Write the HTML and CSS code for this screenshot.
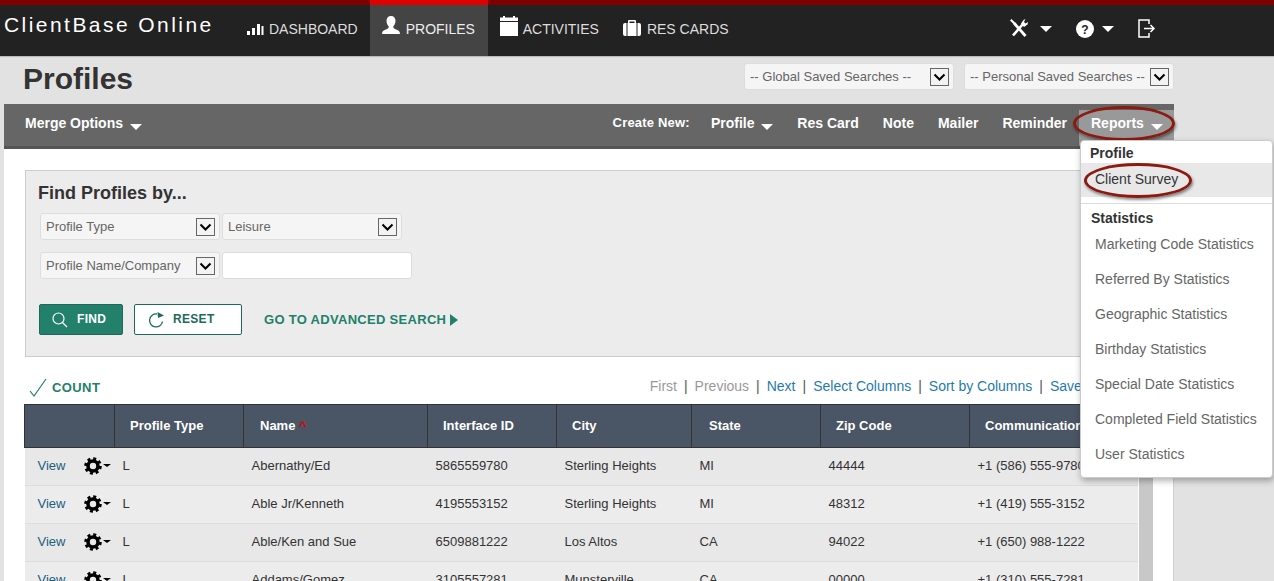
FILE: index.html
```html
<!DOCTYPE html>
<html lang="en">
<head>
<meta charset="utf-8">
<title>ClientBase Online</title>
<link rel="stylesheet" href="styles.css">
</head>
<body>
<svg class="defs" width="0" height="0" aria-hidden="true">
  <symbol id="gear" viewBox="0 0 18 18">
    <circle cx="9" cy="9" r="5" fill="none" stroke="#000" stroke-width="3.6"/>
    <circle cx="9" cy="9" r="7.2" fill="none" stroke="#000" stroke-width="3.2" stroke-dasharray="2.9 2.75"/>
  </symbol>
  <symbol id="chev" viewBox="0 0 19 18">
    <rect x="0.5" y="0.5" width="18" height="17" fill="#f3f3f3" stroke="#666"/>
    <path d="M4.5 6.5 9.5 11.5 14.5 6.5" fill="none" stroke="#000" stroke-width="2"/>
  </symbol>
</svg>

<header class="topbar">
  <div class="brand">ClientBase Online</div>
  <nav class="mainnav">
    <a class="navitem nav-dash"><svg class="ico" width="18" height="16" viewBox="0 0 18 16"><path fill="#fff" d="M1 10h3v4H1zM6 7h3v7H6zM11 3h3v11h-3zM15.500 5h2v9h-2z"/></svg>DASHBOARD</a>
    <a class="navitem active nav-prof"><svg class="ico" width="18" height="20" viewBox="0 0 18 20"><path fill="#fff" d="M9 0c3 0 4.500 2 4.500 5 0 2.500-1.200 4.500-2.300 5.500 0 1.500 1 2.300 3 3 2.300.8 3.800 1.800 3.800 4.500H0c0-2.700 1.500-3.700 3.800-4.500 2-.7 3-1.500 3-3C5.700 9.500 4.500 7.500 4.500 5 4.500 2 6 0 9 0z"/></svg>PROFILES</a>
    <a class="navitem nav-act"><svg class="ico" width="18" height="20" viewBox="0 0 18 20"><path fill="#fff" d="M0 6h18v14H0zM0 1.500h3V0h2v1.500h8V0h2v1.500h3V5H0z"/></svg>ACTIVITIES</a>
    <a class="navitem nav-res"><svg class="ico" width="18" height="16" viewBox="0 0 18 16"><path fill="#fff" d="M6 0h6a1 1 0 0 1 1 1v2h3a2 2 0 0 1 2 2v9a2 2 0 0 1-2 2H2a2 2 0 0 1-2-2V5a2 2 0 0 1 2-2h3V1a1 1 0 0 1 1-1zm.5 1.500V3h5V1.500z"/><path stroke="#222" stroke-width="1" d="M4 3v13M14 3v13"/></svg>RES CARDS</a>
  </nav>
  <div class="tools">
    <svg class="tool-ico" width="18" height="19" viewBox="0 0 18 19"><path fill="none" stroke="#fff" stroke-width="2.800" d="M4 4 15.500 17"/><path fill="none" stroke="#fff" stroke-width="2.600" d="M13 5 3 16.500"/><path fill="#fff" d="M11 4.500 13.500 1 15.500 0 14 3l1.500 1.500L18 3l-.5 2.500L14 8zM0 1.500 1.500 0 5 3.500 3.500 5z"/></svg>
    <span class="caret big"></span>
    <svg class="tool-ico help" width="18" height="18" viewBox="0 0 18 18"><circle cx="9" cy="9" r="9" fill="#fff"/><text x="9" y="13.500" class="help-q">?</text></svg>
    <span class="caret big second"></span>
    <svg class="tool-ico logout" width="18" height="19" viewBox="0 0 18 19"><path fill="none" stroke="#fff" stroke-width="1.500" d="M11 5V1H1v17h10v-4M6 9.500h10M12.500 6l3.500 3.500-3.500 3.500"/></svg>
  </div>
</header>

<main class="content">
  <div class="pagehead">
    <h1>Profiles</h1>
    <div class="searches">
      <div class="sel saved"><span>-- Global Saved Searches --</span><svg class="chev"><use href="#chev"/></svg></div>
      <div class="sel saved"><span>-- Personal Saved Searches --</span><svg class="chev"><use href="#chev"/></svg></div>
    </div>
  </div>

  <div class="toolbar">
    <a class="tb merge">Merge Options <i class="caret"></i></a>
    <div class="tb-right">
      <span class="tb create">Create New:</span>
      <a class="tb">Profile <i class="caret"></i></a>
      <a class="tb">Res Card</a>
      <a class="tb">Note</a>
      <a class="tb">Mailer</a>
      <a class="tb">Reminder</a>
      <a class="tb reports">Reports <i class="caret"></i><span class="oval oval-reports"></span></a>
    </div>
  </div>

  <section class="panel">
    <div class="findbox">
      <h2>Find Profiles by...</h2>
      <div class="findrow">
        <div class="sel field"><span>Profile Type</span><svg class="chev"><use href="#chev"/></svg></div>
        <div class="sel field"><span>Leisure</span><svg class="chev"><use href="#chev"/></svg></div>
      </div>
      <div class="findrow">
        <div class="sel field"><span>Profile Name/Company</span><svg class="chev"><use href="#chev"/></svg></div>
        <input class="textinput" type="text" aria-label="Profile name">
      </div>
      <div class="actions">
        <button class="btn btn-find"><svg width="16" height="16" viewBox="0 0 16 16"><circle cx="6.500" cy="6.500" r="5.500" fill="none" stroke="#fff" stroke-width="1.200"/><path d="M10.500 10.500 15 15" stroke="#fff" stroke-width="1.200"/></svg>FIND</button>
        <button class="btn btn-reset"><svg width="17" height="16" viewBox="0 0 17 16"><path d="M14.500 9.500A6.500 6.500 0 1 1 9 2" fill="none" stroke="#1d6a5a" stroke-width="1.300"/><path d="M9.500 0 16 3.500 10 6z" fill="#1d6a5a"/></svg>RESET</button>
        <a class="advanced">GO TO ADVANCED SEARCH<i class="tri"></i></a>
      </div>
    </div>

    <div class="listbar">
      <a class="count"><svg width="19" height="19" viewBox="0 0 19 19"><path d="M1 13l4 5L17 1" fill="none" stroke="#22806b" stroke-width="1.200"/></svg>COUNT</a>
      <div class="pager">
        <span class="off">First</span><b>|</b><span class="off">Previous</span><b>|</b><a>Next</a><b>|</b><a>Select Columns</a><b>|</b><a>Sort by Columns</a><b>|</b><a>Save Columns</a>
      </div>
    </div>

    <div class="tablewrap">
      <table class="grid">
        <colgroup><col class="c1"><col class="c2"><col class="c3"><col class="c4"><col class="c5"><col class="c6"><col class="c7"><col class="c8"></colgroup>
        <thead>
          <tr><th></th><th>Profile Type</th><th class="th-name">Name <em>^</em></th><th>Interface ID</th><th>City</th><th class="th-state">State</th><th>Zip Code</th><th>Communication</th></tr>
        </thead>
        <tbody>
          <tr><td class="act"><a>View</a><span class="gearbox"><svg width="18" height="18"><use href="#gear"/></svg><i class="caret mini"></i></span></td><td>L</td><td>Abernathy/Ed</td><td>5865559780</td><td>Sterling Heights</td><td>MI</td><td>44444</td><td>+1 (586) 555-9780</td></tr>
          <tr><td class="act"><a>View</a><span class="gearbox"><svg width="18" height="18"><use href="#gear"/></svg><i class="caret mini"></i></span></td><td>L</td><td>Able Jr/Kenneth</td><td>4195553152</td><td>Sterling Heights</td><td>MI</td><td>48312</td><td>+1 (419) 555-3152</td></tr>
          <tr><td class="act"><a>View</a><span class="gearbox"><svg width="18" height="18"><use href="#gear"/></svg><i class="caret mini"></i></span></td><td>L</td><td>Able/Ken and Sue</td><td>6509881222</td><td>Los Altos</td><td>CA</td><td>94022</td><td>+1 (650) 988-1222</td></tr>
          <tr><td class="act"><a>View</a><span class="gearbox"><svg width="18" height="18"><use href="#gear"/></svg><i class="caret mini"></i></span></td><td>L</td><td>Addams/Gomez</td><td>3105557281</td><td>Munsterville</td><td>CA</td><td>00000</td><td>+1 (310) 555-7281</td></tr>
        </tbody>
      </table>
      <div class="scroll"></div>
    </div>
  </section>
</main>

<aside class="menu">
  <div class="mhead first">Profile</div>
  <a class="mitem current">Client Survey<span class="oval oval-survey"></span></a>
  <hr>
  <div class="mhead stats">Statistics</div>
  <a class="mitem">Marketing Code Statistics</a>
  <a class="mitem">Referred By Statistics</a>
  <a class="mitem">Geographic Statistics</a>
  <a class="mitem">Birthday Statistics</a>
  <a class="mitem">Special Date Statistics</a>
  <a class="mitem">Completed Field Statistics</a>
  <a class="mitem">User Statistics</a>
</aside>
</body>
</html>
```
FILE: styles.css
```css
* { box-sizing: border-box; }
html, body { margin: 0; height: 581px; overflow: hidden; }
body { background: #e2e2e2; font-family: "Liberation Sans", Arial, sans-serif; font-size: 14px; color: #333; position: relative; }
.defs { position: absolute; }
a { text-decoration: none; }

.topbar { height: 56px; background: #222; border-top: 5px solid #800000; display: flex; align-items: stretch; color: #fff; box-shadow: 0 1px 1px #bbb; }
.brand { width: 234px; padding: 8px 0 0 4px; font-size: 21px; letter-spacing: 2.45px; white-space: nowrap; }
.mainnav { display: flex; }
.navitem { display: flex; align-items: center; color: #ddd; font-size: 14px; padding: 0 12px 4px; white-space: nowrap; }
.navitem .ico { margin-right: 5px; }
.navitem.active { background: #444; border-top: 5px solid #e00000; margin-top: -5px; color: #eee; }
.nav-prof { width: 118px; }
.nav-prof .ico { margin: -6px 6px 0 0; }
.nav-act .ico { margin: -6px 5px 0 0; }
.nav-res .ico { margin: -2px 6px 0 0; }
.tools { margin-left: auto; display: flex; align-items: center; padding: 0 118px 4px 0; }
.tool-ico { display: block; }
.help { margin-left: 24px; }
.logout { margin-left: 24px; }
.help-q { font-family: "Liberation Sans", sans-serif; font-size: 12px; font-weight: 700; text-anchor: middle; fill: #222; }
.caret { display: inline-block; width: 0; height: 0; border-left: 6px solid transparent; border-right: 6px solid transparent; border-top: 6px solid #fff; margin-left: 2px; vertical-align: -1px; }
.caret.big { margin-left: 12px; }
.caret.big.second { margin-left: 8px; }
.caret.mini { border-left-width: 4px; border-right-width: 4px; border-top: 3px solid #000; margin-left: 1px; }

.content { width: 1170px; margin-left: 4px; }
.pagehead { height: 48px; display: flex; justify-content: space-between; padding-left: 19px; }
h1 { margin: 6px 0 0; font-size: 30px; line-height: 34px; font-weight: 700; color: #333; }
.searches { display: flex; gap: 10px; padding-top: 7px; }
.sel { display: flex; align-items: center; justify-content: space-between; background: #f5f5f5; border: 1px solid #ddd; border-radius: 3px; height: 27px; color: #666; font-size: 13px; padding: 0 4px 0 5px; white-space: nowrap; }
.sel span { padding-bottom: 1px; }
.sel.saved { width: 210px; }
.chev { width: 19px; height: 18px; flex: none; }

.toolbar { height: 45px; background: #666; border-bottom: 3px solid #555; display: flex; justify-content: space-between; align-items: stretch; }
.tb { color: #fff; font-weight: 700; font-size: 14px; position: relative; display: block; line-height: 38px; white-space: nowrap; }
.tb .caret { margin-left: 3px; vertical-align: -2px; }
.merge { margin-left: 21px; }
.tb-right { display: flex; gap: 24px; }
.tb.create { font-size: 13px; letter-spacing: .2px; margin-right: -3px; }
.reports { background: #999; width: 95px; margin: 6px 0 0 -12px; padding-left: 12px; line-height: 26px; height: 36px; }

.oval { position: absolute; border: 3px solid #8b1a10; border-radius: 50%; box-shadow: 1px 2px 3px rgba(0,0,0,.45); pointer-events: none; }
.oval-reports { left: -6px; top: -4px; width: 102px; height: 35px; }
.oval-survey { left: 3px; top: 0; width: 108px; height: 35px; }

.panel { background: #fff; height: 432px; padding: 21px 21px 0 21px; border-right: 1px solid #d0d0d0; }
.findbox { height: 187px; width: 1128px; background: #ececec; border: 1px solid #ccc; padding: 12px 14px 0 12px; }
h2 { margin: 0 0 10px; font-size: 18px; line-height: 20px; font-weight: 700; color: #333; }
.findrow { display: flex; gap: 2px; margin: 0 0 12px 2px; }
.sel.field { width: 180px; }
.textinput { width: 190px; height: 27px; background: #fff; border: 1px solid #ddd; border-radius: 3px; }
.actions { display: flex; align-items: center; margin: 25px 0 0 1px; }
.btn { height: 31px; border-radius: 2px; font-family: inherit; font-size: 12px; font-weight: 700; letter-spacing: .3px; display: flex; align-items: center; padding: 0 0 2px; }
.btn svg { margin-top: 2px; }
.btn-find { width: 84px; background: #22806b; border: 1px solid #1d6a5a; color: #fff; padding-left: 12px; }
.btn-find svg { margin-right: 9px; }
.btn-reset { width: 108px; margin-left: 11px; background: #fff; border: 1px solid #1d6a5a; color: #1d6a5a; padding-left: 13px; }
.btn-reset svg { margin-right: 8px; }
.advanced { margin-left: 22px; color: #22806b; font-size: 13px; letter-spacing: .3px; font-weight: 700; }
.tri { display: inline-block; width: 0; height: 0; border-left: 8px solid #22806b; border-top: 6px solid transparent; border-bottom: 6px solid transparent; margin-left: 4px; vertical-align: -2px; }

.listbar { height: 47px; display: flex; justify-content: space-between; align-items: flex-end; margin-left: 4px; width: 1112px; padding-bottom: 9px; }
.count { color: #22806b; font-size: 13px; letter-spacing: .4px; font-weight: 700; display: flex; align-items: center; gap: 4px; line-height: 16px; margin-bottom: -2px; }
.pager { font-size: 14px; color: #555; white-space: nowrap; padding-bottom: 1px; }
.pager a { color: #1f7bab; }
.pager .off { color: #999; }
.pager b { font-weight: 400; margin: 0 7px; color: #555; }

.tablewrap { display: flex; margin-left: -1px; width: 1129px; align-items: flex-start; }
.grid { border-collapse: collapse; table-layout: fixed; width: 1113px; flex: none; }
.c1 { width: 90px; } .c2 { width: 129px; } .c3 { width: 184px; } .c4 { width: 129px; }
.c5 { width: 135px; } .c6 { width: 129px; } .c7 { width: 149px; } .c8 { width: 168px; }
.grid th { height: 43px; background: #4a5565; border: 1px solid #333; color: #fff; font-size: 13px; font-weight: 700; text-align: left; padding: 0 0 1px 15px; white-space: nowrap; overflow: hidden; }
.grid th.th-name { padding-left: 16px; }
.grid th.th-state { padding-left: 17px; }
.grid th em { color: #e00000; font-style: normal; }
.grid td { height: 38px; padding: 0 0 3px 8px; font-size: 13px; color: #333; white-space: nowrap; border-bottom: 1px solid #ddd; background: #ececec; }
.grid tbody tr:nth-child(odd) td { background: #e8e8e8; }
.grid td.act { padding-left: 13px; padding-bottom: 1px; }
.act a { color: #215e7e; }
.gearbox { margin-left: 19px; display: inline-flex; align-items: center; vertical-align: -5px; margin-top: -2px; }
.gearbox svg { display: block; }
.scroll { width: 15px; margin: 43px 0 0 1px; height: 200px; background: #c8c8c8; }

.menu { position: absolute; left: 1080px; top: 140px; width: 193px; height: 338px; background: #fff; border: 1px solid #ccc; border-radius: 4px; box-shadow: 1px 3px 6px rgba(0,0,0,.3); }
.mhead { font-weight: 700; color: #333; font-size: 14px; line-height: 16px; padding-left: 10px; }
.mhead.first { padding: 4px 0 0 9px; height: 22px; }
.mhead.stats { margin-bottom: 1px; }
.mitem { display: block; height: 35px; line-height: 35px; padding-left: 14px; color: #666; font-size: 14px; white-space: nowrap; position: relative; }
.mitem.current { background: #e8e8e8; color: #333; height: 34px; line-height: 32px; }
.menu hr { border: 0; border-top: 1px solid #ddd; margin: 6px 0 6px; }
```
